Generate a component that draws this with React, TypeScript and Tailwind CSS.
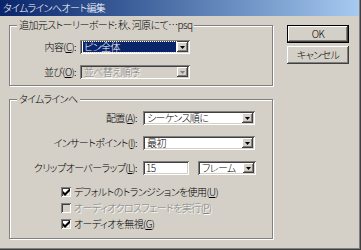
import type { ReactNode } from "react";

function Arrow({ disabled }: { disabled?: boolean }) {
  return (
    <svg width="5" height="3" viewBox="0 0 5 3" className="block">
      <path d="M0 0h5L2.5 3z" fill={disabled ? "#808080" : "#000"} />
    </svg>
  );
}

function Combo({
  text,
  width,
  disabled,
  selected,
}: {
  text: string;
  width: string;
  disabled?: boolean;
  selected?: boolean;
}) {
  return (
    <div
      className={`${width} h-[14px] flex items-stretch p-[2px] shadow-[inset_1px_1px_0_#808080,inset_-1px_-1px_0_#fff,inset_2px_2px_0_#404040,inset_-2px_-2px_0_#d4d0c8] ${
        disabled ? "bg-[#d4d0c8]" : "bg-white"
      }`}
    >
      <div className="flex-1 flex items-center pl-[1px] pr-[1px] min-w-0">
        {selected ? (
          <span className="flex-1 h-full flex items-center pl-[1px] bg-[#0a246a] text-white outline-1 outline-dotted outline-[#fff]">
            {text}
          </span>
        ) : (
          <span
            className={
              disabled ? "text-[#808080] pl-[1px] [text-shadow:1px_1px_0_#fff]" : "pl-[1px]"
            }
          >
            {text}
          </span>
        )}
      </div>
      <div className="w-[11px] bg-[#d4d0c8] flex items-center justify-center shadow-[inset_-1px_-1px_0_#404040,inset_1px_1px_0_#fff,inset_-2px_-2px_0_#808080]">
        <Arrow disabled={disabled} />
      </div>
    </div>
  );
}

function Group({ title, h, children }: { title: string; h: string; children: ReactNode }) {
  return (
    <div
      className={`relative ${h} border border-[#808080] shadow-[inset_1px_1px_0_#fff,1px_1px_0_#fff]`}
    >
      <span className="absolute -top-[7px] left-[7px] px-[2px] bg-[#d4d0c8] leading-[12px]">
        {title}
      </span>
      {children}
    </div>
  );
}

function Check({ label, checked, disabled }: { label: ReactNode; checked?: boolean; disabled?: boolean }) {
  return (
    <div className="h-[16px] flex items-center pl-[51px] gap-[3px]">
      <div
        className={`w-[10px] h-[10px] flex items-center justify-center shadow-[inset_1px_1px_0_#808080,inset_-1px_-1px_0_#fff,inset_2px_2px_0_#404040,inset_-2px_-2px_0_#d4d0c8] ${
          disabled ? "bg-[#d4d0c8]" : "bg-white"
        }`}
      >
        {checked && (
          <svg width="7" height="7" viewBox="0 0 7 7" className="block">
            <path d="M0 2v3l2 2 5-5V-1L2 4z" fill="#000" />
          </svg>
        )}
      </div>
      <span className={disabled ? "text-[#808080] [text-shadow:1px_1px_0_#fff]" : ""}>{label}</span>
    </div>
  );
}

function Btn({ children, primary }: { children: ReactNode; primary?: boolean }) {
  return (
    <div className={primary ? "w-[62px] h-[18px] border border-black" : "w-[62px] h-[18px]"}>
      <div className="w-full h-full flex items-center justify-center bg-[#d4d0c8] shadow-[inset_-1px_-1px_0_#404040,inset_1px_1px_0_#fff,inset_-2px_-2px_0_#808080]">
        {children}
      </div>
    </div>
  );
}

export default function App() {
  return (
    <div className="w-[361px] h-[250px] overflow-hidden flex flex-col bg-[#d4d0c8] text-black text-[10px] font-light leading-none tracking-[-0.6px] font-['Noto_Sans_CJK_JP',sans-serif] [font-feature-settings:'palt'] shadow-[inset_-1px_-1px_0_#404040,inset_-2px_-2px_0_#808080]">
      <div className="h-[16px] mr-[2px] shrink-0 flex items-center pl-[3px] text-white text-[10px] tracking-[-0.6px] bg-gradient-to-r from-[#0a246a] to-[#a6caf0]">
        タイムラインへオート編集
      </div>

      <div className="flex pl-[9px] pt-[9px]">
        <div className="w-[264px] flex flex-col">
          <Group title="追加元ストーリーボード: 秋、河原にて…psq" h="h-[61px]">
            <div className="flex flex-col gap-[11px] pt-[14px]">
              <div className="flex items-center">
                <span className="w-[67px] text-right pr-[1px]">
                  内容(<u>C</u>):
                </span>
                <div className="ml-[3px]">
                  <Combo text="ピン全体" width="w-[110px]" selected />
                </div>
              </div>
              <div className="flex items-center">
                <span className="w-[67px] text-right pr-[1px]">
                  並び(<u>O</u>):
                </span>
                <div className="ml-[3px]">
                  <Combo text="並べ替え順序" width="w-[110px]" disabled />
                </div>
              </div>
            </div>
          </Group>

          <div className="mt-[13px]">
            <Group title="タイムラインへ" h="h-[140px]">
              <div className="flex flex-col gap-[11px] pt-[11px]">
                <div className="flex items-center">
                  <span className="w-[127px] text-right">
                    配置(<u>A</u>):
                  </span>
                  <div className="ml-[6px]">
                    <Combo text="シーケンス順に" width="w-[112px]" />
                  </div>
                </div>
                <div className="flex items-center">
                  <span className="w-[127px] text-right">
                    インサートポイント(<u>I</u>):
                  </span>
                  <div className="ml-[6px]">
                    <Combo text="最初" width="w-[112px]" />
                  </div>
                </div>
                <div className="flex items-center">
                  <span className="w-[127px] text-right">
                    クリップオーバーラップ(<u>L</u>):
                  </span>
                  <div className="ml-[6px] w-[46px] h-[14px] flex items-center pl-[3px] bg-white shadow-[inset_1px_1px_0_#808080,inset_-1px_-1px_0_#fff,inset_2px_2px_0_#404040,inset_-2px_-2px_0_#d4d0c8]">
                    15
                  </div>
                  <div className="ml-[9px]">
                    <Combo text="フレーム" width="w-[58px]" />
                  </div>
                </div>
              </div>
              <div className="flex flex-col mt-[9px]">
                <Check
                  checked
                  label={
                    <>
                      デフォルトのトランジションを使用(<u>U</u>)
                    </>
                  }
                />
                <Check
                  disabled
                  label={
                    <>
                      オーディオクロスフェードを実行(<u>P</u>)
                    </>
                  }
                />
                <Check
                  checked
                  label={
                    <>
                      オーディオを無視(<u>G</u>)
                    </>
                  }
                />
              </div>
            </Group>
          </div>
        </div>

        <div className="ml-[14px] flex flex-col gap-[3px]">
          <Btn primary>OK</Btn>
          <Btn>キャンセル</Btn>
        </div>
      </div>
    </div>
  );
}
